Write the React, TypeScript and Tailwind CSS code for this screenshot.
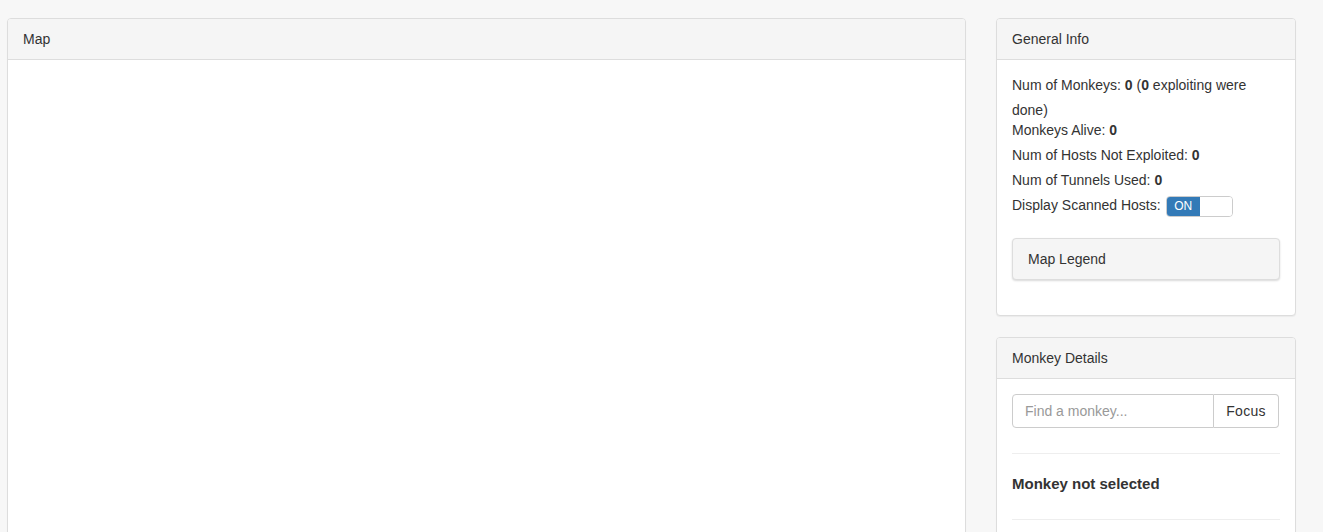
import React from "react";

export default function App() {
  return (
    <div className="min-h-screen bg-[#f7f7f7] text-[#333] text-[14px] leading-[20px]" style={{ fontFamily: '"Liberation Sans", Arial, sans-serif' }}>
      <div className="flex items-start gap-[30px] pl-[7px] pt-[18px]">
        <div className="w-[959px] h-[800px] bg-white border border-[#ddd] rounded-[4px] shadow-[0_1px_1px_rgba(0,0,0,0.05)]">
          <div className="h-[41px] bg-[#f5f5f5] border-b border-[#ddd] rounded-t-[3px] px-[15px] py-[10px]">Map</div>
        </div>
        <div className="w-[300px] flex flex-col">
          <div className="bg-white border border-[#ddd] rounded-[4px] shadow-[0_1px_1px_rgba(0,0,0,0.05)] mb-[21px]">
            <div className="h-[41px] bg-[#f5f5f5] border-b border-[#ddd] rounded-t-[3px] px-[15px] py-[10px]">General Info</div>
            <div className="p-[15px]">
              <div className="mt-[-2.5px] leading-[25px]">
                Num of Monkeys: <b>0</b> (<b>0</b> exploiting were done)
              </div>
              <div className="mt-[-5px] h-[25px] leading-[25px]">Monkeys Alive: <b>0</b></div>
              <div className="h-[25px] leading-[25px]">Num of Hosts Not Exploited: <b>0</b></div>
              <div className="h-[25px] leading-[25px]">Num of Tunnels Used: <b>0</b></div>
              <div className="h-[25px] flex items-center">
                <span>Display Scanned Hosts:</span>
                <span className="ml-[5px] mt-[3px] w-[67px] h-[21px] border border-[#ccc] rounded-[4px] flex overflow-hidden">
                  <span className="w-[33px] h-full bg-[#337ab7] text-white text-[12px] leading-[19px] text-center">ON</span>
                  <span className="flex-1 bg-white" />
                </span>
              </div>
              <div className="mt-[20.5px] mb-[20px] bg-[#f5f5f5] border border-[#ddd] rounded-[4px] shadow-[0_1px_2px_rgba(0,0,0,0.15)] h-[42px] px-[15px] py-[10px]">
                Map Legend
              </div>
            </div>
          </div>
          <div className="h-[400px] bg-white border border-[#ddd] rounded-[4px] shadow-[0_1px_1px_rgba(0,0,0,0.05)]">
            <div className="h-[41px] bg-[#f5f5f5] border-b border-[#ddd] rounded-t-[3px] px-[15px] py-[10px]">Monkey Details</div>
            <div className="p-[15px]">
              <div className="flex h-[34px] w-[267px]">
                <input
                  className="flex-1 min-w-0 h-full border border-[#ccc] rounded-l-[4px] px-[12px] text-[14px] text-[#555] placeholder:text-[#999] bg-white outline-none"
                  placeholder="Find a monkey..."
                  style={{ fontFamily: '"Liberation Sans", Arial, sans-serif' }}
                />
                <button className="h-full w-[65px] border border-[#ccc] border-l-0 rounded-r-[4px] bg-white text-[14px] text-[#333] tracking-[0.3px]" style={{ fontFamily: '"Liberation Sans", Arial, sans-serif' }}>
                  Focus
                </button>
              </div>
              <div className="mt-[25px] border-t border-[#eee]" />
              <div className="mt-[20px] font-bold text-[15px] leading-[20px]">Monkey not selected</div>
              <div className="mt-[25px] border-t border-[#eee]" />
            </div>
          </div>
        </div>
      </div>
    </div>
  );
}
